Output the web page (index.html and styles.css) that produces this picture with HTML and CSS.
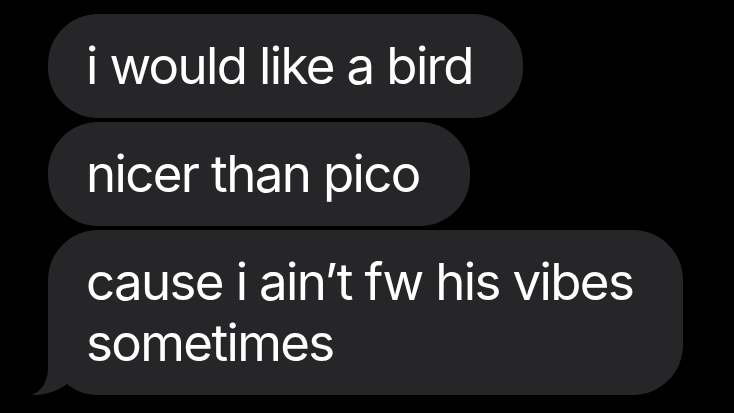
FILE: index.html
```html
<!DOCTYPE html>
<html>
<head>
<meta charset="utf-8">
<link rel="stylesheet" href="styles.css">
</head>
<body>
<div class="thread">
  <div class="bubble">i would like a bird</div>
  <div class="bubble">nicer than pico</div>
  <div class="bubble last">cause i ain’t fw his vibes<br>sometimes
    <svg class="tail" width="40" height="56" viewBox="0 0 40 56"><path d="M16 0 L16 28 C16 44 9 52 0 56 C12 56.5 26 52 35 45 L40 20 Z" fill="#262629"/></svg>
  </div>
</div>
</body>
</html>
```
FILE: styles.css
```css
html, body {
  margin: 0;
  background: #000;
}
.thread {
  display: flex;
  flex-direction: column;
  align-items: flex-start;
  gap: 4px;
  padding: 14px 0 0 48px;
}
.bubble {
  position: relative;
  background: #262629;
  color: #fff;
  font-family: Inter, "Noto Sans", sans-serif;
  font-size: 51px;
  letter-spacing: -0.032em;
  line-height: 61px;
  padding: 21px 50px 22px 38px;
  border-radius: 50px;
  white-space: nowrap;
}
.tail {
  position: absolute;
  left: -16px;
  bottom: 0;
  overflow: visible;
}
```
